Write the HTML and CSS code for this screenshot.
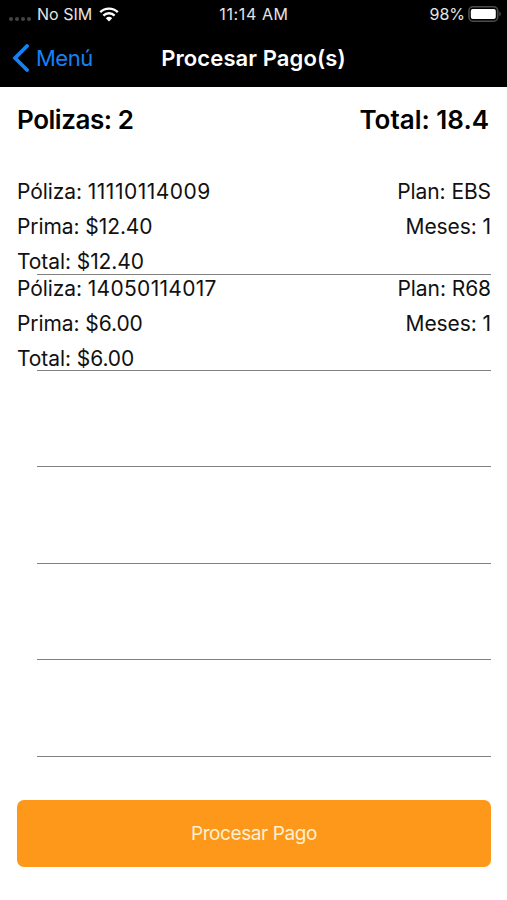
FILE: index.html
```html
<!DOCTYPE html>
<html lang="es">
<head>
    <meta charset="UTF-8">
    <meta name="viewport" content="width=device-width, initial-scale=1.0">
    <title>Procesar Pago(s)</title>
    <link rel="stylesheet" href="styles.css">
</head>
<body>
    <header class="top">
        <div class="status-bar">
            <div class="carrier">
                <span class="signal"><i></i><i></i><i></i><i></i></span>
                <span class="sim">No SIM</span>
                <svg class="wifi" width="20" height="15" viewBox="0 0 20 15">
                    <path d="M1.2 5.2a12.6 12.6 0 0 1 17.6 0M4.4 8.6a8 8 0 0 1 11.2 0" fill="none" stroke="#fff" stroke-width="2.4"/>
                    <path d="M6.8 11.2a4.7 4.7 0 0 1 6.4 0L10 14.6z" fill="#fff"/>
                </svg>
            </div>
            <span class="clock">11:14 AM</span>
            <div class="power">
                <span class="percent">98%</span>
                <svg class="battery" width="34" height="16" viewBox="0 0 34 16">
                    <rect x="0.9" y="0.8" width="28.8" height="14.4" rx="4" fill="none" stroke="#4c4c4c" stroke-width="1.6"/>
                    <rect x="2.8" y="2.9" width="25" height="10.2" rx="2" fill="#fff"/>
                    <path d="M31.3 5.6c2 .8 2 4 0 4.8z" fill="#4c4c4c"/>
                </svg>
            </div>
        </div>
        <nav class="nav-bar">
            <a class="back" href="#">
                <svg width="17" height="28" viewBox="0 0 17 28">
                    <path d="M15 2L3.1 14 15 26" fill="none" stroke="#1482f5" stroke-width="3.8" stroke-linecap="round" stroke-linejoin="miter"/>
                </svg>
                <span>Menú</span>
            </a>
            <h1>Procesar Pago(s)</h1>
        </nav>
    </header>

    <main>
        <div class="summary">
            <span class="count">Polizas: 2</span>
            <span class="total">Total: 18.4</span>
        </div>

        <ul class="policies">
            <li>
                <div class="row"><span>Póliza: <span class="number ones">11110114009</span></span><span>Plan: EBS</span></div>
                <div class="row"><span>Prima: $12.40</span><span>Meses: 1</span></div>
                <div class="row"><span>Total: $12.40</span></div>
            </li>
            <li>
                <div class="row"><span>Póliza: <span class="number">14050114017</span></span><span>Plan: R68</span></div>
                <div class="row"><span>Prima: $6.00</span><span>Meses: 1</span></div>
                <div class="row"><span>Total: $6.00</span></div>
            </li>
            <li></li>
            <li></li>
            <li></li>
            <li></li>
        </ul>

        <button type="button" class="pay-btn">Procesar Pago</button>
    </main>
</body>
</html>
```

FILE: styles.css
```css
* {
    margin: 0;
    padding: 0;
    box-sizing: border-box;
}

body {
    font-family: Inter, Roboto, sans-serif;
    background: #fff;
    color: #111;
    height: 900px;
    overflow: hidden;
}

.top {
    height: 87px;
    background: #000;
    color: #fff;
}

.status-bar {
    height: 28px;
    display: grid;
    grid-template-columns: 1fr auto 1fr;
    align-items: center;
    padding: 0 5px 0 9px;
    font-size: 16px;
    color: #e4e4e4;
}

.carrier,
.power {
    display: flex;
    align-items: center;
}

.power {
    justify-content: flex-end;
    gap: 3px;
}

.clock {
    letter-spacing: 0.6px;
    margin-right: 3px;
}

.signal {
    display: flex;
    gap: 2px;
    margin: 9px 6px 0 0;
}

.signal i {
    width: 4px;
    height: 4px;
    border-radius: 50%;
    background: #444;
}

.wifi {
    margin-left: 7px;
}

.nav-bar {
    height: 59px;
    display: grid;
    grid-template-columns: 1fr auto 1fr;
    align-items: center;
    padding: 0 12px;
}

.back {
    display: flex;
    align-items: center;
    gap: 7px;
    color: #1482f5;
    font-size: 22px;
    letter-spacing: -0.5px;
    text-decoration: none;
}

.nav-bar h1 {
    font-size: 22px;
    font-weight: 600;
    letter-spacing: 0.1px;
}

.summary {
    height: 91.2px;
    padding: 17px 18px 0 17px;
    display: flex;
    justify-content: space-between;
    font-size: 26px;
    font-weight: 600;
    line-height: 32px;
    color: #000;
}

.count {
    letter-spacing: -0.45px;
}

.policies {
    list-style: none;
    padding: 0 16px 0 17px;
}

.policies li {
    height: 96.4px;
    display: flex;
    flex-direction: column;
    gap: 9px;
}

.policies li::after {
    content: "";
    height: 1px;
    flex-shrink: 0;
    margin: auto 0 0 20px;
    background: #808080;
}

/* the last line of text hangs right over the separator */
.policies li .row:nth-child(3) {
    margin-bottom: -11px;
}

.row {
    display: flex;
    justify-content: space-between;
    font-size: 21px;
    line-height: 27px;
    margin-bottom: -1px;
    letter-spacing: -0.08px;
}

.number {
    letter-spacing: 0.3px;
}

.ones {
    letter-spacing: 0.5px;
}

.pay-btn {
    display: block;
    width: 474px;
    height: 67px;
    margin: 43.4px 0 0 17px;
    padding-top: 1px;
    border: none;
    border-radius: 7px;
    background: #fd981b;
    color: #fff0d0;
    font-family: inherit;
    font-size: 19px;
    letter-spacing: -0.4px;
    cursor: pointer;
}
```
